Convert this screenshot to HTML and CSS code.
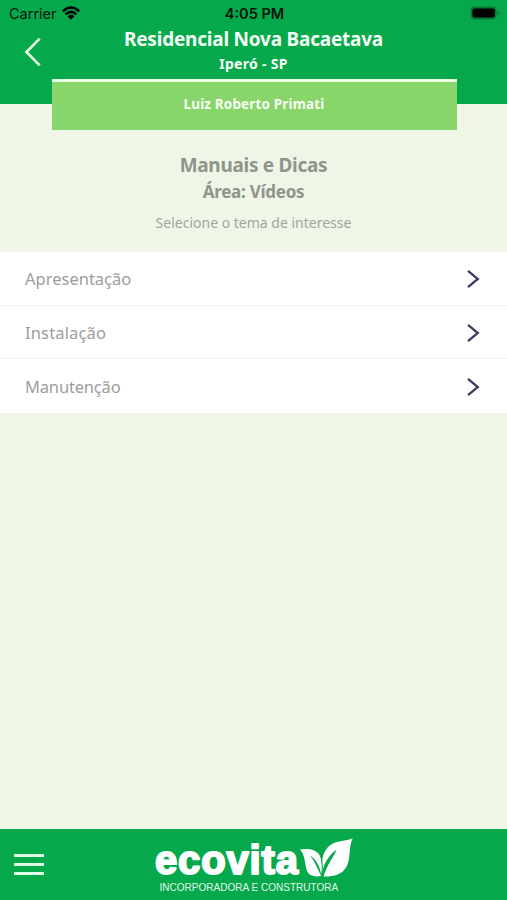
FILE: index.html
```html
<!DOCTYPE html>
<html lang="pt-BR">
<head>
<meta charset="utf-8">
<title>Manuais e Dicas</title>
<link rel="stylesheet" href="styles.css">
</head>
<body>
<div class="app">
  <header class="header">
    <div class="status">
      <span class="carrier">Carrier
        <svg class="wifi" width="20" height="15" viewBox="0 0 20 15"><path d="M1.9 5.3Q10-2.2 18.1 5.3M4.7 8.3Q10 3.5 15.3 8.3" fill="none" stroke="#000" stroke-width="2.5"/><path d="M6.6 10.3Q10 7.4 13.4 10.3L10 13.7Z"/></svg>
      </span>
      <span class="time">4:05 PM</span>
      <svg class="battery" width="30" height="14" viewBox="0 0 30 14"><rect x=".6" y=".6" width="26" height="12.8" rx="3.8" fill="#087b36"/><rect x="2.4" y="2.4" width="22.4" height="9.2" rx="2"/><path d="M27.7 4.8Q29.5 5.2 29.5 7T27.7 9.2Z" fill="#087b36"/></svg>
    </div>
    <div class="heading">
      <svg class="back" width="18" height="30" viewBox="0 0 18 30"><path d="M15.7 1.6 2.4 15 15.7 28.4" fill="none" stroke="#e2fde9" stroke-width="2.6"/></svg>
      <div class="place">
        <h1>Residencial Nova Bacaetava</h1>
        <p>Iperó - SP</p>
      </div>
    </div>
  </header>
  <div class="user">Luiz Roberto Primati</div>
  <main>
    <div class="intro">
      <h2>Manuais e Dicas</h2>
      <h3>Área: Vídeos</h3>
      <p>Selecione o tema de interesse</p>
    </div>
    <ul class="topics">
      <li><span>Apresentação</span><svg class="chevron" width="14" height="20" viewBox="0 0 14 20"><path d="M2 1.8 11.8 10 2 18.2"/></svg></li>
      <li><span class="wide">Instalação</span><svg class="chevron" width="14" height="20" viewBox="0 0 14 20"><path d="M2 1.8 11.8 10 2 18.2"/></svg></li>
      <li><span class="narrow">Manutenção</span><svg class="chevron" width="14" height="20" viewBox="0 0 14 20"><path d="M2 1.8 11.8 10 2 18.2"/></svg></li>
    </ul>
  </main>
  <footer class="footer">
    <div class="menu"><i></i><i></i><i></i></div>
    <svg class="logo" width="204" height="60" viewBox="151 835 204 60" fill="#fff">
      <text class="brand" x="155" y="874" textLength="143" lengthAdjust="spacing">ecovita</text>
      <path d="M300 849.5C306 848.3 314 848.5 318.500 853.5C322 858 322.5 868 321.3 876C317 876.8 312 876.5 309 874C304 869 306.5 856 300 849.5Z"/>
      <path d="M352.6 838.5C348 848 351.5 859 346 867.5C341.5 875 333 877 322 876.5C321 867 321 855 327.6 847.5C334 840.5 344 841.5 352.6 838.5Z"/>
      <path class="vein" d="M309.8 855.5C316 859 320 866 321.5 876.5C317 868 315 861.5 309.8 855.5Z"/>
      <path class="vein" d="M336.5 849.5C333.5 858 327 864 323.5 877H321.5C322.5 865 328 856 336.5 849.5Z"/>
      <path class="split" d="M321.3 856C322.5 863 322.5 869 321.8 876"/>
    </svg>
  </footer>
  <p class="tagline">INCORPORADORA E CONSTRUTORA</p>
</div>
</body>
</html>
```
FILE: styles.css
```css
* { box-sizing: border-box; margin: 0; padding: 0; }
body { background: #eff6e8; font-family: "Noto Sans", sans-serif; }
.app { display: flex; flex-direction: column; width: 507px; height: 900px; overflow: hidden; }
.header { height: 103.5px; background: #06a84c; color: #f5fff6; flex: none; }
.status { display: grid; grid-template-columns: 1fr auto 1fr; height: 26px; padding: 1px 7px 0 9px; align-items: center; color: #00150a; font: 14.5px/26px Inter, sans-serif; }
.carrier { display: flex; align-items: center; gap: 4px; }
.wifi { margin-top: -2px; }
.time { font-weight: 600; }
.battery { justify-self: end; margin-top: -2px; }
.heading { display: grid; grid-template-columns: 51px 1fr 51px; }
.back { margin: 11px 0 0 24px; }
.place { text-align: center; }
h1 { font-size: 19px; line-height: 26px; letter-spacing: -.22px; }
.place p { font-size: 14px; font-weight: 700; line-height: 24px; letter-spacing: .3px; }
.user { flex: none; width: 405px; height: 51px; margin: -24.5px 0 0 51.5px; position: relative; border-top: 3px solid #e8fbe3; background: #87d56b; color: #f7fff2; text-align: center; font-size: 13.5px; font-weight: 700; line-height: 45px; letter-spacing: .15px; }
main { flex: 1; }
.intro { height: 122px; padding-top: 21px; text-align: center; color: #8e958b; }
h2 { font-size: 19px; line-height: 28px; letter-spacing: -.3px; }
h3 { font-size: 17px; line-height: 26px; letter-spacing: -.25px; }
.intro p { margin-top: 6px; font-size: 14px; line-height: 24px; color: #a0a69c; }
.topics { list-style: none; background: #fff; }
.topics li { display: flex; align-items: center; justify-content: space-between; height: 53.7px; padding: 0 27px 0 25px; border-bottom: 1px solid #f3f5f1; color: #9d9d9d; font-size: 16.5px; }
.topics li:last-child { border: 0; }
.wide { letter-spacing: .15px; }
.narrow { letter-spacing: -.18px; }
.chevron { position: relative; top: 1px; }
.chevron path { fill: none; stroke: #3d3b61; stroke-width: 2.3; }
.footer { display: flex; flex: none; height: 52px; background: #06a84c; align-items: flex-start; }
.menu { display: grid; gap: 6px; width: 30px; margin: 25px 107px 0 14px; }
.menu i { height: 3px; background: #dcffe6; }
.logo { height: 60px; flex: none; margin-top: 6px; overflow: hidden; }
.brand { font: 700 40px "Liberation Sans", sans-serif; stroke: #fff; stroke-width: 2; stroke-linejoin: round; }
.tagline { flex: none; height: 19px; padding-left: 159.5px; background: #06a84c; color: #e2fae7; font: 10px/13px "Liberation Sans", sans-serif; letter-spacing: .02px; }
.vein { fill: #06a84c; }
.split { fill: none; stroke: #06a84c; stroke-width: 1; }
```
